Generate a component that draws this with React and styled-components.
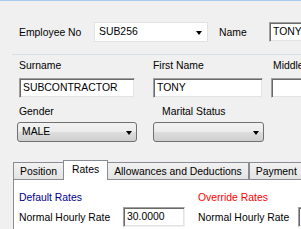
import React from 'react'
import styled, { createGlobalStyle } from 'styled-components'

const Global = createGlobalStyle`
  html, body {
    margin: 0;
    padding: 0;
    background: #f0f0f0;
  }
  * {
    box-sizing: border-box;
  }
`

const Window = styled.div`
  width: 301px;
  height: 229px;
  overflow: hidden;
  background: #f0f0f0;
  border-top: 1px solid #a9c9ee;
  font-family: "Liberation Sans", Arial, sans-serif;
  font-size: 10.4px;
  color: #000;
`

const HeaderRow = styled.div`
  display: flex;
  align-items: center;
  margin-top: 21px;
  padding-left: 19px;
  height: 20px;
`

const Label = styled.div`
  width: ${p => p.w || 'auto'};
  line-height: 13px;
  white-space: nowrap;
  flex-shrink: 0;
  color: ${p => p.color || '#000'};
`

const FlatCombo = styled.div`
  position: relative;
  width: ${p => p.w};
  height: 20px;
  background: #fff;
  border: 1px solid #e2e2e2;
  padding: 2px 0 0 4px;
  line-height: 14px;
  flex-shrink: 0;
`

const Arrow = styled.span`
  position: absolute;
  right: ${p => p.r || '5px'};
  top: 8px;
  width: 0;
  height: 0;
  border-left: 3.5px solid transparent;
  border-right: 3.5px solid transparent;
  border-top: 4px solid #000;
`

const TextBox = styled.div`
  width: ${p => p.w};
  height: 20px;
  flex-shrink: 0;
  background: #fff;
  border: 1px solid;
  border-color: #a0a0a0 #f0f0f0 #f0f0f0 #a0a0a0;
  box-shadow: inset 1px 1px 0 #696969, inset -1px -1px 0 #e3e3e3;
  padding: 2px 0 0 3px;
  line-height: 14px;
  white-space: nowrap;
  overflow: hidden;
`

const Separator = styled.div`
  height: 1px;
  margin: 12px 0 0 12px;
  background: #d5dfe5;
`

const FieldRow = styled.div`
  display: flex;
  padding-left: ${p => p.pl || '19px'};
  margin-top: ${p => p.mt};
`

const Field = styled.div`
  display: flex;
  flex-direction: column;
  width: ${p => p.w};
  flex-shrink: 0;
  gap: ${p => p.gap || '6px'};
`

const FieldLabel = styled(Label)`
  padding-left: ${p => p.indent || '0'};
`

const ButtonCombo = styled.div`
  position: relative;
  width: ${p => p.w};
  height: 20px;
  border: 1px solid #707070;
  border-radius: 3px;
  background: linear-gradient(#f2f2f2 0%, #ebebeb 50%, #dddddd 51%, #cfcfcf 100%);
  padding: 2px 0 0 4px;
  line-height: 14px;
`

const Tabs = styled.div`
  display: flex;
  align-items: flex-end;
  margin: 18px 0 0 13px;
  height: 20px;
`

const Tab = styled.div`
  height: ${p => (p.active ? '20px' : '18px')};
  padding: ${p => (p.active ? '0 8px' : '0 6px')};
  margin: ${p => (p.active ? '0 -1px' : '0')};
  line-height: 17px;
  border: 1px solid #898c95;
  border-bottom: ${p => (p.active ? 'none' : '1px solid #898c95')};
  background: ${p => (p.active ? '#fff' : 'linear-gradient(#f2f2f2, #e3e3e3)')};
  position: relative;
  z-index: ${p => (p.active ? 2 : 1)};
  white-space: nowrap;
  flex-shrink: 0;
`

const Panel = styled.div`
  margin-left: 13px;
  height: 60px;
  background: #fff;
  border-left: 1px solid #898c95;
  padding: 11px 0 0 5px;
  display: grid;
  grid-template-columns: 179px auto;
  align-content: start;
  row-gap: 3px;
`

const RateRow = styled.div`
  display: flex;
  align-items: center;
`

export default function App() {
  return (
    <>
      <Global />
      <Window>
        <HeaderRow>
          <Label w="75px">Employee No</Label>
          <FlatCombo w="114px">
            SUB256
            <Arrow r="5px" />
          </FlatCombo>
          <Label w="50px" style={{ marginLeft: '11px' }}>Name</Label>
          <TextBox w="60px">TONY</TextBox>
        </HeaderRow>
        <Separator />
        <FieldRow mt="4px">
          <Field w="134px">
            <FieldLabel>Surname</FieldLabel>
            <TextBox w="116px">SUBCONTRACTOR</TextBox>
          </Field>
          <Field w="118px">
            <FieldLabel>First Name</FieldLabel>
            <TextBox w="110px">TONY</TextBox>
          </Field>
          <Field w="60px">
            <FieldLabel indent="2px">Middle</FieldLabel>
            <TextBox w="60px" />
          </Field>
        </FieldRow>
        <FieldRow mt="7px" pl="17px">
          <Field w="136px" gap="4px">
            <FieldLabel indent="2px">Gender</FieldLabel>
            <ButtonCombo w="120px">
              MALE
              <Arrow r="4px" />
            </ButtonCombo>
          </Field>
          <Field w="111px" gap="4px">
            <FieldLabel indent="9px">Marital Status</FieldLabel>
            <ButtonCombo w="111px">
              <Arrow r="4px" />
            </ButtonCombo>
          </Field>
        </FieldRow>
        <Tabs>
          <Tab>Position</Tab>
          <Tab active>Rates</Tab>
          <Tab>Allowances and Deductions</Tab>
          <Tab>Payment</Tab>
        </Tabs>
        <Panel>
          <Label color="#00008b">Default Rates</Label>
          <Label color="#ff0000">Override Rates</Label>
          <RateRow>
            <Label w="104px">Normal Hourly Rate</Label>
            <TextBox w="62px">30.0000</TextBox>
          </RateRow>
          <RateRow>
            <Label w="100px">Normal Hourly Rate</Label>
            <TextBox w="40px" />
          </RateRow>
        </Panel>
      </Window>
    </>
  )
}
